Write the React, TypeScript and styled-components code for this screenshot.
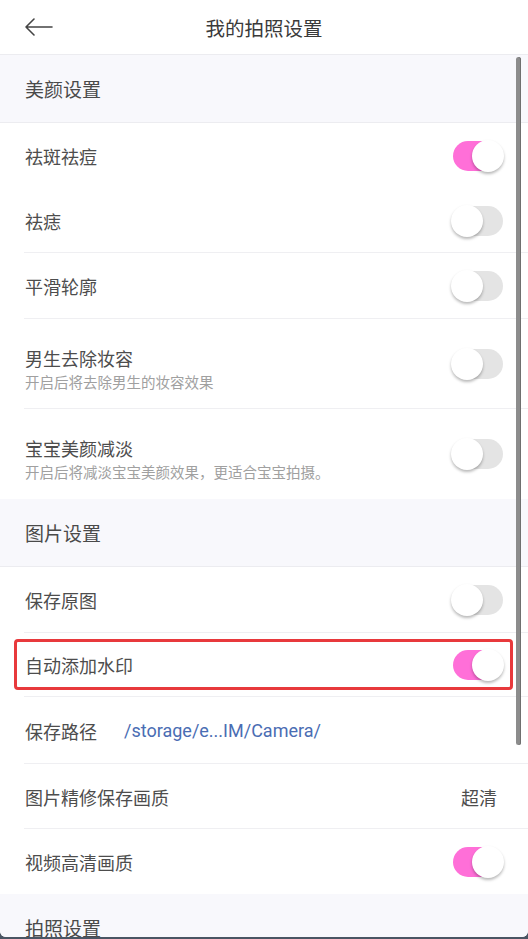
import React from "react";
import styled, { createGlobalStyle } from "styled-components";

const Global = createGlobalStyle`
  html, body { margin: 0; padding: 0; background: #4a5563; }
  body { font-family: Roboto, "Noto Sans CJK SC", "Noto Sans", sans-serif; }
  * { box-sizing: border-box; }
`;

const Screen = styled.div`
  position: relative;
  width: 528px;
  height: 937px;
  overflow: hidden;
  background: #ffffff;
  border-radius: 0 0 6px 6px;
`;

const Header = styled.header`
  height: 55px;
  display: flex;
  align-items: center;
  justify-content: center;
  position: relative;
  border-bottom: 1px solid #ececf0;
  background: #fff;
`;

const Back = styled.button`
  position: absolute;
  left: 20px;
  top: 13px;
  width: 36px;
  height: 28px;
  padding: 0;
  border: none;
  background: transparent;
  display: flex;
  align-items: center;
  justify-content: center;
`;

const Title = styled.h1`
  margin: 0;
  font-family: "Noto Sans CJK SC", sans-serif;
  font-size: 19.5px;
  font-weight: 400;
  color: #3a3a3a;
`;

const SectionHeader = styled.div`
  height: 68px;
  padding-left: 25px;
  display: flex;
  align-items: center;
  background: #f8f8fc;
  border-bottom: 1px solid #ececf0;
  font-family: "Noto Sans CJK SC", sans-serif;
  font-size: 19px;
  color: #4a4a4a;
`;

const Row = styled.div<{ $h?: number; $divider?: boolean }>`
  position: relative;
  height: ${(p) => p.$h ?? 65}px;
  padding: 0 26px 0 25px;
  display: flex;
  align-items: center;
  justify-content: space-between;
  background: #fff;
  &::after {
    content: "";
    display: ${(p) => (p.$divider ? "block" : "none")};
    position: absolute;
    left: 24px;
    right: 0;
    bottom: 0;
    height: 1px;
    background: #efeff2;
  }
`;

const Texts = styled.div`
  display: flex;
  flex-direction: column;
  gap: 4px;
  margin-top: 9px;
`;

const Label = styled.div`
  font-family: "Noto Sans CJK SC", sans-serif;
  font-size: 18px;
  color: #4d4d4d;
  line-height: 22px;
`;

const Sub = styled.div`
  font-family: "Noto Sans CJK SC", sans-serif;
  font-size: 14.5px;
  color: #a0a0a0;
  line-height: 18px;
`;

const PathRow = styled.div`
  display: flex;
  align-items: center;
  gap: 27px;
`;

const PathText = styled.span`
  font-family: Roboto, sans-serif;
  font-size: 18px;
  color: #4a6db3;
`;

const Value = styled.span`
  font-family: "Noto Sans CJK SC", sans-serif;
  font-size: 18px;
  color: #4d4d4d;
  margin-right: 5px;
`;

const Track = styled.div<{ $on: boolean }>`
  position: relative;
  width: 50px;
  height: 30px;
  border-radius: 15px;
  background: ${(p) => (p.$on ? "#ff6fd8" : "#e4e4e4")};
  margin-right: -1px;
`;

const Knob = styled.div<{ $on: boolean }>`
  position: absolute;
  top: -1px;
  ${(p) => (p.$on ? "right: -1px;" : "left: -2px;")}
  width: 32px;
  height: 32px;
  border-radius: 50%;
  background: #fff;
  box-shadow: 0 2px 3px rgba(0, 0, 0, 0.28);
`;

const Highlight = styled.div`
  position: absolute;
  left: 14px;
  right: 15px;
  top: 6px;
  bottom: 7px;
  border: 3px solid #e8393c;
  border-radius: 4px;
  pointer-events: none;
`;

const Scrollbar = styled.div`
  position: absolute;
  left: 516px;
  top: 57px;
  width: 5px;
  height: 688px;
  border-radius: 3px;
  background: #8c8c8c;
  box-shadow: inset -1px 0 0 #6f6f6f;
`;

const Toggle = ({ on }: { on: boolean }) => (
  <Track $on={on}>
    <Knob $on={on} />
  </Track>
);

export default function App() {
  return (
    <>
      <Global />
      <Screen>
        <Header>
          <Back aria-label="back">
            <svg width="30" height="22" viewBox="0 0 30 22">
              <path
                d="M29 11 H3 M11 3 L3 11 L11 19"
                fill="none"
                stroke="#444"
                strokeWidth="1.6"
                strokeLinecap="round"
                strokeLinejoin="round"
              />
            </svg>
          </Back>
          <Title>我的拍照设置</Title>
        </Header>

        <SectionHeader>美颜设置</SectionHeader>
        <Row $h={65}>
          <Label>祛斑祛痘</Label>
          <Toggle on />
        </Row>
        <Row $h={65} $divider>
          <Label>祛痣</Label>
          <Toggle on={false} />
        </Row>
        <Row $h={66} $divider>
          <Label>平滑轮廓</Label>
          <Toggle on={false} />
        </Row>
        <Row $h={90} $divider>
          <Texts>
            <Label>男生去除妆容</Label>
            <Sub>开启后将去除男生的妆容效果</Sub>
          </Texts>
          <Toggle on={false} />
        </Row>
        <Row $h={90}>
          <Texts>
            <Label>宝宝美颜减淡</Label>
            <Sub>开启后将减淡宝宝美颜效果，更适合宝宝拍摄。</Sub>
          </Texts>
          <Toggle on={false} />
        </Row>

        <SectionHeader>图片设置</SectionHeader>
        <Row $h={66} $divider>
          <Label>保存原图</Label>
          <Toggle on={false} />
        </Row>
        <Row $h={64} $divider>
          <Label>自动添加水印</Label>
          <Toggle on />
          <Highlight />
        </Row>
        <Row $h={67} $divider>
          <PathRow>
            <Label>保存路径</Label>
            <PathText>/storage/e...IM/Camera/</PathText>
          </PathRow>
        </Row>
        <Row $h={65} $divider>
          <Label>图片精修保存画质</Label>
          <Value>超清</Value>
        </Row>
        <Row $h={65}>
          <Label>视频高清画质</Label>
          <Toggle on />
        </Row>

        <SectionHeader>拍照设置</SectionHeader>
        <Scrollbar />
      </Screen>
    </>
  );
}
